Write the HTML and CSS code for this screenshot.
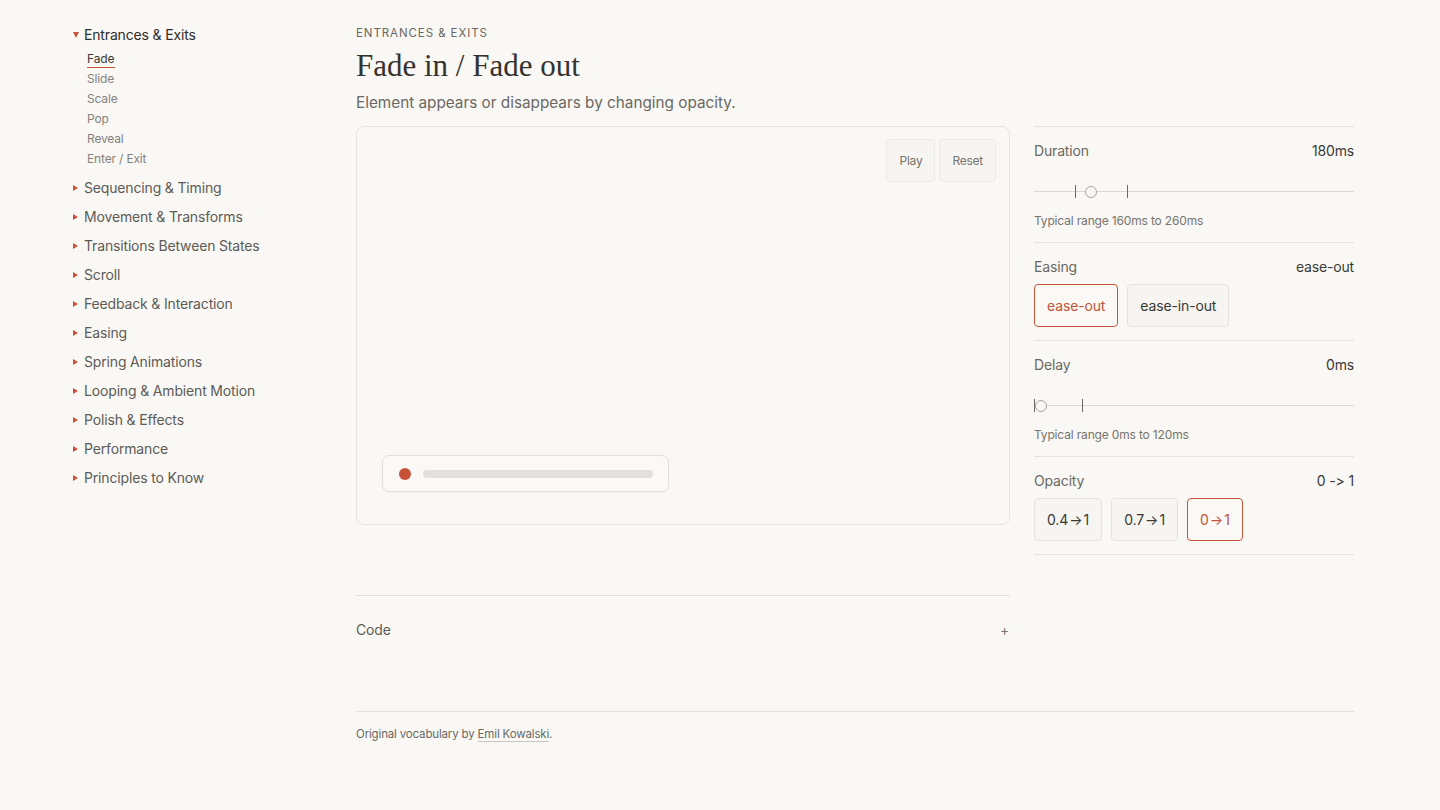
FILE: index.html
```html
<!DOCTYPE html>
<html lang="en">
<head>
  <meta charset="UTF-8" />
  <meta name="viewport" content="width=device-width, initial-scale=1" />
  <title>Fade in / Fade out</title>
  <link rel="stylesheet" href="styles.css">
</head>
<body>
  <div class="page">
    <nav class="sidebar">
      <ul class="groups">
        <li class="group open">
          <span class="caret"></span><span class="group-title">Entrances &amp; Exits</span>
          <ul class="items">
            <li class="item active">Fade</li>
            <li class="item">Slide</li>
            <li class="item">Scale</li>
            <li class="item">Pop</li>
            <li class="item">Reveal</li>
            <li class="item">Enter / Exit</li>
          </ul>
        </li>
        <li class="group"><span class="caret"></span><span class="group-title">Sequencing &amp; Timing</span></li>
        <li class="group"><span class="caret"></span><span class="group-title">Movement &amp; Transforms</span></li>
        <li class="group"><span class="caret"></span><span class="group-title">Transitions Between States</span></li>
        <li class="group"><span class="caret"></span><span class="group-title">Scroll</span></li>
        <li class="group"><span class="caret"></span><span class="group-title">Feedback &amp; Interaction</span></li>
        <li class="group"><span class="caret"></span><span class="group-title">Easing</span></li>
        <li class="group"><span class="caret"></span><span class="group-title">Spring Animations</span></li>
        <li class="group"><span class="caret"></span><span class="group-title">Looping &amp; Ambient Motion</span></li>
        <li class="group"><span class="caret"></span><span class="group-title">Polish &amp; Effects</span></li>
        <li class="group"><span class="caret"></span><span class="group-title">Performance</span></li>
        <li class="group"><span class="caret"></span><span class="group-title">Principles to Know</span></li>
      </ul>
    </nav>

    <main class="main">
      <div class="eyebrow">ENTRANCES &amp; EXITS</div>
      <h1 class="title">Fade in / Fade out</h1>
      <p class="lead">Element appears or disappears by changing opacity.</p>

      <div class="workspace">
        <div class="preview">
          <div class="preview-actions">
            <button class="ghost">Play</button>
            <button class="ghost">Reset</button>
          </div>
          <div class="demo-card">
            <span class="demo-dot"></span>
            <span class="demo-bar"></span>
          </div>
        </div>

        <div class="controls">
          <div class="control">
            <div class="control-head"><span>Duration</span><span class="value">180ms</span></div>
            <div class="slider">
              <span class="track"></span>
              <span class="tick" style="left: 41px"></span>
              <span class="tick" style="left: 93px"></span>
              <span class="thumb" style="left: 57px"></span>
            </div>
            <div class="hint">Typical range 160ms to 260ms</div>
          </div>

          <div class="control choice">
            <div class="control-head"><span>Easing</span><span class="value">ease-out</span></div>
            <div class="options">
              <button class="option selected">ease-out</button>
              <button class="option">ease-in-out</button>
            </div>
          </div>

          <div class="control">
            <div class="control-head"><span>Delay</span><span class="value">0ms</span></div>
            <div class="slider">
              <span class="track"></span>
              <span class="tick" style="left: 0px"></span>
              <span class="tick" style="left: 48px"></span>
              <span class="thumb" style="left: 7px"></span>
            </div>
            <div class="hint">Typical range 0ms to 120ms</div>
          </div>

          <div class="control choice">
            <div class="control-head"><span>Opacity</span><span class="value">0 -&gt; 1</span></div>
            <div class="options">
              <button class="option">0.4&#8202;→&#8202;1</button>
              <button class="option">0.7&#8202;→&#8202;1</button>
              <button class="option selected">0&#8202;→&#8202;1</button>
            </div>
          </div>
        </div>
      </div>

      <div class="code-toggle">
        <span>Code</span>
        <span class="plus">+</span>
      </div>

      <footer class="footer">
        Original vocabulary by <a href="#">Emil Kowalski</a>.
      </footer>
    </main>
  </div>
</body>
</html>
```

FILE: styles.css
```css
* {
  box-sizing: border-box;
}

body {
  margin: 0;
  background: #f9f8f5;
  color: #3a3835;
  font-family: Inter, "Noto Sans", sans-serif;
  letter-spacing: -0.01em;
}

.page {
  display: grid;
  grid-template-columns: 283px 998px;
  padding-left: 73px;
  padding-top: 25px;
}

/* sidebar */

.groups, .items {
  list-style: none;
  margin: 0;
  padding: 0;
}

.group {
  font-size: 14px;
  line-height: 20px;
  color: #5e5b55;
  margin-bottom: 9px;
}

.group.open .group-title {
  color: #2f2d2a;
}

.caret {
  display: inline-block;
  width: 0;
  height: 0;
  border-top: 3px solid transparent;
  border-bottom: 3px solid transparent;
  border-left: 5px solid #c4543a;
  margin-right: 6px;
  vertical-align: 2px;
}

.group.open .caret {
  border-left: 3px solid transparent;
  border-right: 3px solid transparent;
  border-top: 6px solid #c4543a;
  border-bottom: 0;
  margin-right: 5px;
  vertical-align: 2px;
}

.items {
  padding-left: 14px;
  margin-top: 4px;
}

.item {
  font-size: 12px;
  line-height: 20px;
  color: #85827b;
}

.item.active {
  color: #3a3835;
}

.item.active::after {
  content: "";
  display: block;
  width: 28px;
  height: 1px;
  background: #c4543a;
  margin-top: -2px;
  margin-bottom: 1px;
}

/* main */

.main {
  display: flex;
  flex-direction: column;
}

.eyebrow {
  font-size: 11.5px;
  letter-spacing: 0.08em;
  color: #6b6862;
  line-height: 16px;
}

.title {
  font-family: "Liberation Serif", serif;
  font-weight: normal;
  font-size: 31px;
  line-height: 36px;
  margin: 7px 0 0;
  color: #35332f;
  letter-spacing: 0;
}

.lead {
  font-size: 15.3px;
  letter-spacing: 0;
  line-height: 20px;
  color: #6b6862;
  margin: 9px 0 13px;
}

.workspace {
  display: grid;
  grid-template-columns: 654px 320px;
  gap: 24px;
  align-items: start;
}

.preview {
  height: 399px;
  border: 1px solid #e6e3dd;
  border-radius: 8px;
  padding: 12px 13px 32px 25px;
  display: flex;
  flex-direction: column;
  justify-content: space-between;
}

.preview-actions {
  display: flex;
  justify-content: flex-end;
  gap: 4px;
}

.ghost {
  font-family: inherit;
  font-size: 12px;
  letter-spacing: -0.02em;
  color: #77746e;
  background: #f6f5f1;
  border: 1px solid #eceae4;
  border-radius: 4px;
  height: 43px;
  padding: 0 12px;
}

.demo-card {
  width: 287px;
  height: 37px;
  border: 1px solid #e3e0da;
  border-radius: 7px;
  background: #faf9f6;
  box-shadow: 0 1px 2px rgba(0, 0, 0, 0.03);
  display: flex;
  align-items: center;
  padding: 0 15px 0 16px;
  gap: 12px;
}

.demo-dot {
  width: 12px;
  height: 12px;
  border-radius: 50%;
  background: #c8513a;
  flex: none;
}

.demo-bar {
  flex: 1;
  height: 8px;
  border-radius: 4px;
  background: #e2e0dc;
}

/* controls */

.controls {
  border-top: 1px solid #e6e3dd;
}

.control {
  border-bottom: 1px solid #e6e3dd;
  padding: 15px 0 14px;
}

.control.choice {
  padding-bottom: 13px;
}

.control-head {
  display: flex;
  justify-content: space-between;
  font-size: 14px;
  line-height: 18px;
  color: #6b6862;
}

.control-head .value {
  color: #3a3835;
}

.slider {
  position: relative;
  height: 14px;
  margin: 25px 0 15px;
}

.track {
  position: absolute;
  left: 0;
  right: 0;
  top: 6px;
  height: 1px;
  background: #dcd9d3;
}

.tick {
  position: absolute;
  top: 0;
  width: 1px;
  height: 13px;
  background: #6b6862;
}

.thumb {
  position: absolute;
  top: 1px;
  width: 12px;
  height: 12px;
  margin-left: -6px;
  border-radius: 50%;
  border: 1px solid #a9a69f;
  background: #f9f8f5;
}

.hint {
  font-size: 12px;
  line-height: 14px;
  color: #77746e;
}

.options {
  display: flex;
  gap: 9px;
  margin-top: 8px;
}

.option {
  font-family: inherit;
  font-size: 14px;
  letter-spacing: -0.01em;
  color: #3a3835;
  background: #f6f5f1;
  border: 1px solid #e6e3dd;
  border-radius: 4px;
  height: 43px;
  padding: 0 12px;
}

.option.selected {
  color: #c4543a;
  border-color: #c4543a;
  background: #faf9f6;
}

/* code + footer */

.code-toggle {
  width: 654px;
  margin-top: 40px;
  border-top: 1px solid #e3e0da;
  padding-top: 25px;
  display: flex;
  justify-content: space-between;
  font-size: 14px;
  line-height: 18px;
  color: #5e5b55;
}

.plus {
  color: #77746e;
  padding-right: 1px;
}

.footer {
  margin-top: 72px;
  border-top: 1px solid #e3e0da;
  padding-top: 14px;
  font-size: 11.5px;
  line-height: 16px;
  color: #6b6862;
}

.footer a {
  color: #6b6862;
  text-decoration: none;
  border-bottom: 1px solid #c9c6bf;
}
```
